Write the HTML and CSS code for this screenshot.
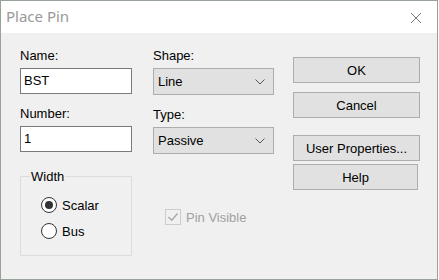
FILE: index.html
```html
<!DOCTYPE html>
<html lang="en">
<head>
    <meta charset="UTF-8">
    <title>Place Pin</title>
    <link rel="stylesheet" href="styles.css">
</head>
<body>
    <div class="window">
        <div class="titlebar">
            <span class="title">Place Pin</span>
            <svg class="close" width="12" height="12" viewBox="0 0 12 12">
                <path d="M1 1 L11 11 M11 1 L1 11" stroke="#777" stroke-width="1" fill="none"/>
            </svg>
        </div>

        <div class="content">
            <div class="col col-left">
                <label class="label">Name:</label>
                <div class="edit">BST</div>
                <label class="label label-next">Number:</label>
                <div class="edit">1</div>

                <fieldset class="group">
                    <legend>Width</legend>
                    <div class="radio-row">
                        <span class="radio checked"></span>
                        <span>Scalar</span>
                    </div>
                    <div class="radio-row">
                        <span class="radio"></span>
                        <span>Bus</span>
                    </div>
                </fieldset>
            </div>

            <div class="col col-mid">
                <label class="label">Shape:</label>
                <div class="combo">
                    <span>Line</span>
                    <svg width="10" height="6" viewBox="0 0 10 6"><path d="M0.5 0.5 L5 5 L9.5 0.5" stroke="#555" fill="none"/></svg>
                </div>
                <label class="label label-next">Type:</label>
                <div class="combo">
                    <span>Passive</span>
                    <svg width="10" height="6" viewBox="0 0 10 6"><path d="M0.5 0.5 L5 5 L9.5 0.5" stroke="#555" fill="none"/></svg>
                </div>

                <div class="check-row">
                    <span class="check">
                        <svg width="12" height="12" viewBox="0 0 12 12"><path d="M1.5 6 L4.8 9.2 L10.5 2.5" stroke="#a8a8a8" stroke-width="1.4" fill="none"/></svg>
                    </span>
                    <span>Pin Visible</span>
                </div>
            </div>

            <div class="col col-right">
                <button class="btn">OK</button>
                <button class="btn">Cancel</button>
                <button class="btn btn-gap">User Properties...</button>
                <button class="btn btn-help">Help</button>
            </div>
        </div>
    </div>
</body>
</html>
```

FILE: styles.css
```css
html, body {
    margin: 0;
    padding: 0;
    background: #fff;
}
.window {
    width: 438px;
    height: 280px;
    box-sizing: border-box;
    border: 1px solid #98a298;
    background: #f0f0f0;
    display: flex;
    flex-direction: column;
    font-family: "Liberation Sans", Arial, sans-serif;
    font-size: 13px;
    color: #000;
}
.titlebar {
    height: 32px;
    background: #fff;
    display: flex;
    align-items: center;
    justify-content: space-between;
    padding: 0 15px 2px 5px;
    box-sizing: border-box;
    flex-shrink: 0;
}
.title {
    font-family: "Noto Sans", "Open Sans", sans-serif;
    font-size: 15px;
    color: #999;
}
.close {
    margin-top: 4px;
}
.content {
    display: flex;
    padding-left: 19px;
}
.col {
    display: flex;
    flex-direction: column;
}
.col-left {
    width: 112px;
    padding-top: 15px;
}
.col-mid {
    width: 121px;
    margin-left: 21px;
    padding-top: 15px;
}
.col-right {
    width: 127px;
    margin-left: 19px;
    padding-top: 24px;
}
.label {
    line-height: 15px;
    height: 15px;
    margin-bottom: 5px;
}
.label-next {
    margin-top: 12px;
}
.edit {
    height: 26px;
    box-sizing: border-box;
    border: 1px solid #7a7a7a;
    background: #fff;
    padding: 0 3px;
    line-height: 24px;
}
.combo {
    height: 27px;
    box-sizing: border-box;
    border: 1px solid #adadad;
    background: #e1e1e1;
    padding: 0 8px 0 4px;
    display: flex;
    align-items: center;
    justify-content: space-between;
}
.group {
    margin: 18px 0 0;
    padding: 9px 0 0;
    height: 86px;
    box-sizing: border-box;
    border: 1px solid #dcdcdc;
    min-width: 0;
}
.group legend {
    padding: 0 1px;
    margin-left: 9px;
    line-height: 13px;
}
.radio-row {
    display: flex;
    align-items: center;
    gap: 5px;
    height: 26px;
    padding-left: 20px;
}
.radio {
    width: 16px;
    height: 16px;
    box-sizing: border-box;
    border: 1px solid #333;
    border-radius: 50%;
    background: #fff;
    display: flex;
    align-items: center;
    justify-content: center;
}
.radio.checked::after {
    content: "";
    width: 8px;
    height: 8px;
    border-radius: 50%;
    background: #333;
}
.check-row {
    display: flex;
    align-items: center;
    gap: 5px;
    margin-top: 55px;
    margin-left: 12px;
    color: #a0a0a0;
}
.check {
    width: 16px;
    height: 16px;
    box-sizing: border-box;
    border: 1px solid #ccc;
    background: #f0f0f0;
    display: flex;
    align-items: center;
    justify-content: center;
}
.btn {
    height: 26px;
    box-sizing: border-box;
    border: 1px solid #adadad;
    background: #e1e1e1;
    font-family: "Liberation Sans", Arial, sans-serif;
    font-size: 13px;
    color: #000;
    padding: 0;
    margin: 0 0 9px;
}
.btn-gap {
    margin-top: 8px;
    margin-bottom: 3px;
}
.btn-help {
    width: 125px;
}
```
